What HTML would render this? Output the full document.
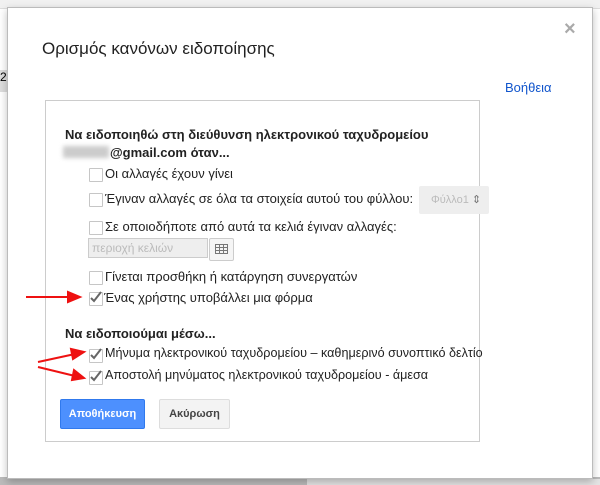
<!DOCTYPE html><html><head><meta charset="utf-8"><style>
body{margin:0;width:600px;height:485px;overflow:hidden;background:#fff;font-family:"Liberation Sans",Arial,sans-serif;position:relative}
.a{position:absolute;white-space:nowrap}
.cb{position:absolute;width:12px;height:12px;border:1px solid #c6c6c6;background:#fff;border-radius:1px}
.t{font-size:13px;color:#222}
</style></head><body>
<div class="a" style="left:0;top:0;width:600px;height:8px;background:#f1f1f1;border-bottom:1px solid #ddd"></div>
<div class="a" style="left:0;top:70px;width:8px;height:22px;background:#ddd;font-size:12px">2</div>
<div class="a" style="left:0;top:477px;width:600px;height:8px;background:#bbb"></div>
<div class="a" style="left:307px;top:479px;width:293px;height:6px;background:#e4e4e4"></div>
<div class="a" style="left:7px;top:7px;width:584px;height:470px;background:#fff;border:1px solid #bbb;box-shadow:0 3px 8px rgba(0,0,0,.25)"></div>
<div class="a" style="left:42px;top:39px;font-size:17px;color:#222">Ορισμός κανόνων ειδοποίησης</div>
<div class="a" style="left:564px;top:18px;font-size:20px;color:#aaa;font-weight:bold">×</div>
<div class="a" style="left:505px;top:80px;font-size:13px;color:#15c">Βοήθεια</div>
<div class="a" style="left:45px;top:100px;width:433px;height:340px;border:1px solid #ccc"></div>
<div class="a t" style="left:65px;top:127px;font-weight:bold">Να ειδοποιηθώ στη διεύθυνση ηλεκτρονικού ταχυδρομείου</div>
<div class="a" style="left:63px;top:146px;width:46px;height:12px;background:#ccc;filter:blur(2px)"></div>
<div class="a t" style="left:110px;top:145px;font-weight:bold">@gmail.com όταν...</div>
<div class="cb" style="left:89px;top:168px"></div><div class="a t" style="left:105px;top:166px">Οι αλλαγές έχουν γίνει</div>
<div class="cb" style="left:89px;top:193px"></div><div class="a t" style="left:105px;top:191px">Έγιναν αλλαγές σε όλα τα στοιχεία αυτού του φύλλου:</div>
<div class="a" style="left:419px;top:186px;width:70px;height:28px;background:#eee;border-radius:2px;font-size:11px;color:#bbb;line-height:28px;text-indent:12px">Φύλλο1 <span style="color:#777">⇕</span></div>
<div class="cb" style="left:89px;top:221px"></div><div class="a t" style="left:105px;top:219px">Σε οποιοδήποτε από αυτά τα κελιά έγιναν αλλαγές:</div>
<div class="a" style="left:88px;top:238px;width:118px;height:18px;background:#eee;border:1px solid #ccc;font-size:12px;color:#bbb;line-height:18px;text-indent:3px">περιοχή κελιών</div>
<div class="a" style="left:209px;top:238px;width:23px;height:21px;background:#f5f5f5;border:1px solid #ccc;border-radius:2px"><svg width="23" height="21"><g stroke="#777" fill="none"><rect x="5.5" y="5.5" width="12" height="9"/><path d="M5 8.5h13M5 11.5h13M9.5 5v10M13.5 5v10"/></g></svg></div>
<div class="cb" style="left:89px;top:271px"></div><div class="a t" style="left:105px;top:269px">Γίνεται προσθήκη ή κατάργηση συνεργατών</div>
<div class="cb" style="left:89px;top:292px"></div><svg class="a" style="left:88px;top:289px" width="16" height="16"><path d="M3 9l3 3 7-9" stroke="#666" stroke-width="2" fill="none"/></svg><div class="a t" style="left:104px;top:290px">Ένας χρήστης υποβάλλει μια φόρμα</div>
<div class="a t" style="left:65px;top:326px;font-weight:bold">Να ειδοποιούμαι μέσω...</div>
<div class="cb" style="left:89px;top:349px"></div><svg class="a" style="left:88px;top:346px" width="16" height="16"><path d="M3 9l3 3 7-9" stroke="#666" stroke-width="2" fill="none"/></svg><div class="a t" style="left:105px;top:346px;font-size:12.6px">Μήνυμα ηλεκτρονικού ταχυδρομείου – καθημερινό συνοπτικό δελτίο</div>
<div class="cb" style="left:89px;top:371px"></div><svg class="a" style="left:88px;top:368px" width="16" height="16"><path d="M3 9l3 3 7-9" stroke="#666" stroke-width="2" fill="none"/></svg><div class="a t" style="left:105px;top:368px;font-size:12.6px">Αποστολή μηνύματος ηλεκτρονικού ταχυδρομείου - άμεσα</div>
<div class="a" style="left:60px;top:399px;width:83px;height:28px;background:#4d90fe;border:1px solid #3079ed;border-radius:2px;color:#fff;font-size:11px;font-weight:bold;text-align:center;line-height:28px">Αποθήκευση</div>
<div class="a" style="left:159px;top:399px;width:69px;height:28px;background:#f3f3f3;border:1px solid #ddd;border-radius:2px;color:#444;font-size:11px;font-weight:bold;text-align:center;line-height:28px">Ακύρωση</div>
<svg class="a" style="left:0;top:0" width="600" height="485"><g stroke="#e11" stroke-width="2" fill="#e11">
<path d="M26 297H70" fill="none"/><path d="M80 297l-12-5v10z"/>
<path d="M38 362L75 354" fill="none"/><path d="M84 352l-13-3 2 10z"/>
<path d="M38 367L75 376" fill="none"/><path d="M84 378l-10-8-2 10z"/></g></svg>
</body></html>
